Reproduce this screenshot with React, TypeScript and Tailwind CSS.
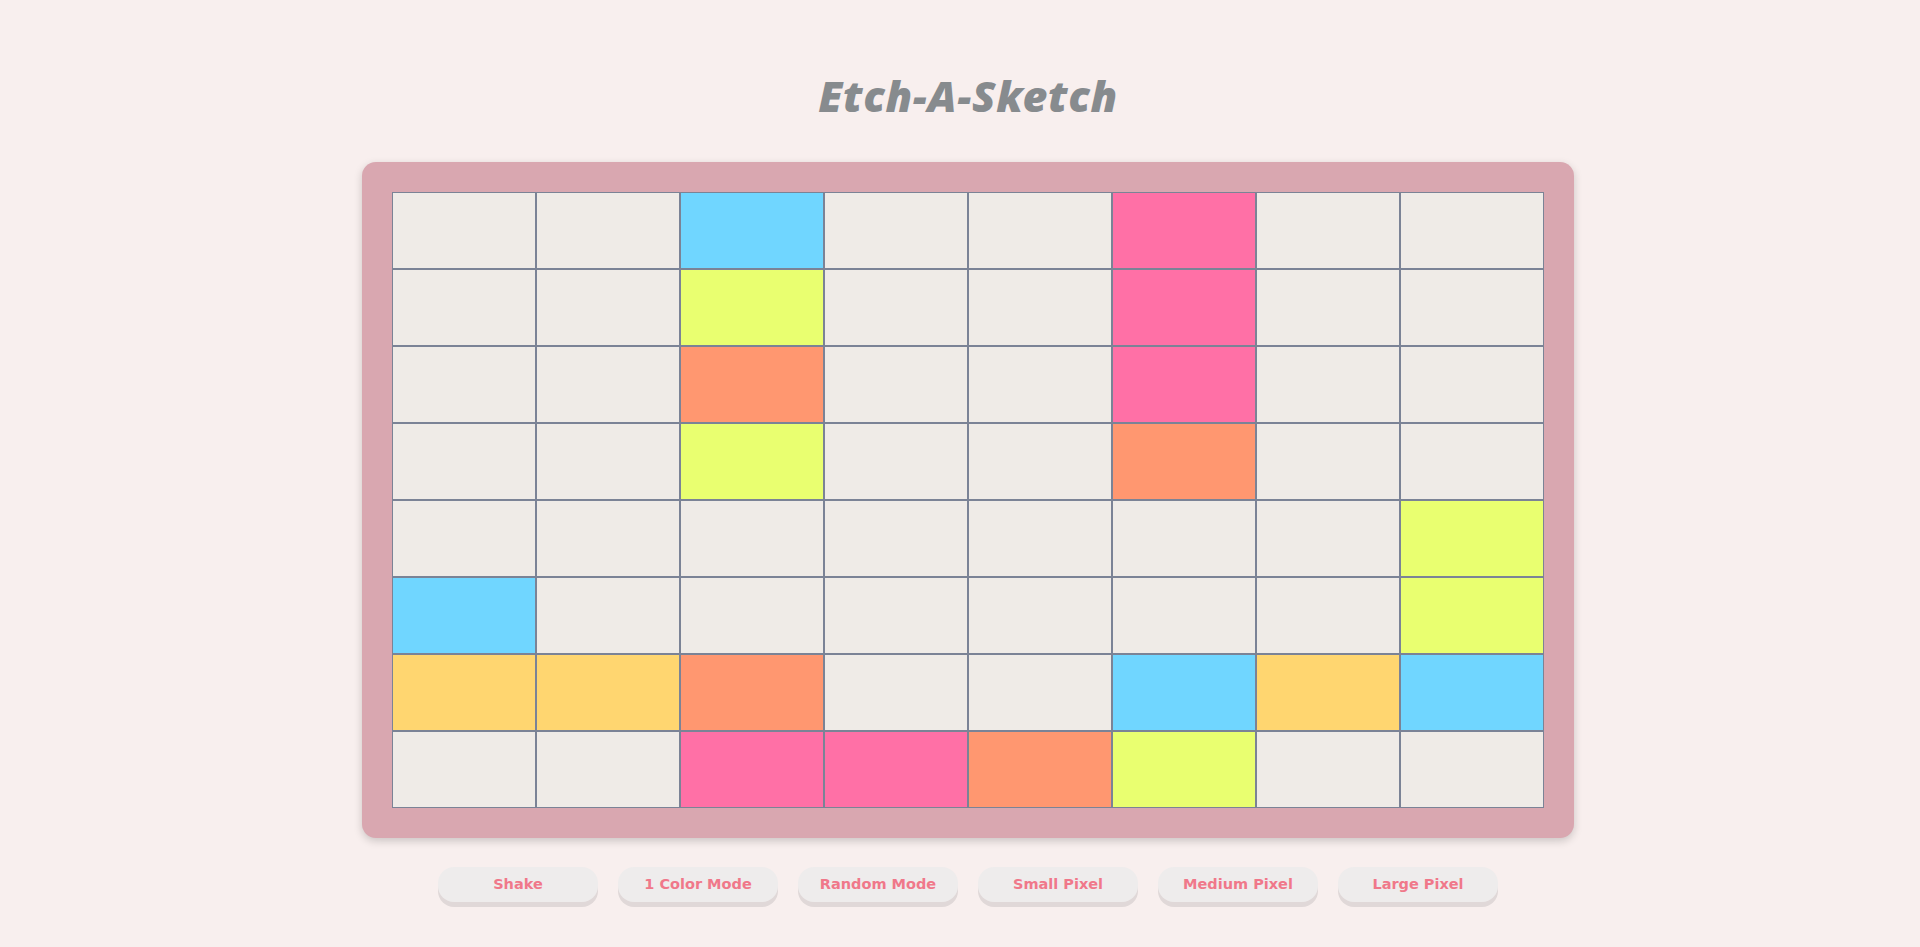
import React from "react";

const E = "bg-[#efebe7]";
const B = "bg-[#70d6ff]";
const P = "bg-[#ff70a6]";
const O = "bg-[#ff9770]";
const L = "bg-[#ffd670]";
const Y = "bg-[#e9ff70]";

const grid: string[][] = [
  [E, E, B, E, E, P, E, E],
  [E, E, Y, E, E, P, E, E],
  [E, E, O, E, E, P, E, E],
  [E, E, Y, E, E, O, E, E],
  [E, E, E, E, E, E, E, Y],
  [B, E, E, E, E, E, E, Y],
  [L, L, O, E, E, B, L, B],
  [E, E, P, P, O, Y, E, E],
];

const buttons = ["Shake", "1 Color Mode", "Random Mode", "Small Pixel", "Medium Pixel", "Large Pixel"];

export default function App() {
  return (
    <div className="min-h-[947px] w-full bg-[#f8efee] flex flex-col items-center pl-[16px]">
      <h1
        className="mt-[70px] text-[43px] leading-[52px] font-black italic text-[#878b8e] tracking-[0.6px]"
        style={{ fontFamily: "'Noto Sans', Lato, sans-serif" }}
      >
        Etch-A-Sketch
      </h1>
      <div className="mt-[40px] w-[1212px] h-[676px] bg-[#d9a7b0] rounded-[14px] p-[30px] shadow-[0_3px_8px_rgba(0,0,0,0.18)]">
        <div className="grid grid-cols-8 w-[1152px]">
          {grid.flat().map((c, i) => (
            <div key={i} className={`${c} h-[77px] border border-[#7b8396]`} />
          ))}
        </div>
      </div>
      <div className="mt-[29px] flex gap-[20px]">
        {buttons.map((b) => (
          <button
            key={b}
            className="w-[160px] h-[35px] rounded-[16px] bg-[#eeecec] text-[#f0788a] text-[14.5px] font-bold shadow-[0_5px_0_#e0d8d8]"
            style={{ fontFamily: "'DejaVu Sans', Verdana, sans-serif" }}
          >
            {b}
          </button>
        ))}
      </div>
    </div>
  );
}
